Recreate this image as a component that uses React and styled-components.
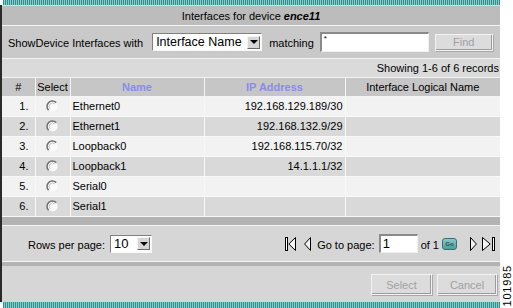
import React from "react";
import styled, { createGlobalStyle } from "styled-components";

const Global = createGlobalStyle`
  html, body { margin: 0; padding: 0; background: #fff; }
  body { font-family: "Liberation Sans", Arial, sans-serif; font-size: 11px; color: #000; }
`;

const Page = styled.div`
  display: flex;
  width: 513px;
  height: 308px;
  overflow: hidden;
`;

const Panel = styled.div`
  width: 500px;
  display: flex;
  flex-direction: column;
`;

const Stripe = styled.div`
  height: ${(p) => p.$h}px;
  margin-left: 3px;
  background: repeating-linear-gradient(90deg, #2f9090 0 1px, #8ccaca 1px 2px);
  flex: none;
`;

const Body = styled.div`
  flex: 1;
  border-left: 2px solid #2a2a2a;
  display: flex;
  flex-direction: column;
  background: #d6d6d6;
`;

const Title = styled.div`
  height: 19px;
  background: #bcbcbc;
  border-top: 1px solid #dcdcdc;
  border-bottom: 1px solid #f4f4f4;
  display: flex;
  align-items: center;
  justify-content: center;
  font-size: 11px;
  b { font-style: italic; margin-left: 3px; }
`;

const FilterRow = styled.div`
  height: 32px;
  background: #c9c9c9;
  border-bottom: 1px solid #f4f4f4;
  display: flex;
  align-items: center;
  padding-left: 6px;
`;

const Label = styled.span`
  margin-right: ${(p) => p.$mr || 0}px;
  white-space: nowrap;
  padding-top: 2px;
`;

const FakeSelect = styled.div`
  width: ${(p) => p.$w}px;
  height: ${(p) => p.$h}px;
  box-sizing: border-box;
  background: #fff;
  border-top: 1px solid #808080;
  border-left: 1px solid #808080;
  border-right: 1px solid #f8f8f8;
  border-bottom: 1px solid #f8f8f8;
  display: flex;
  align-items: center;
  justify-content: space-between;
  padding-left: 3px;
  padding-right: 1px;
  font-size: ${(p) => p.$fs}px;
  margin-right: ${(p) => p.$mr || 0}px;
  white-space: nowrap;
`;

const ArrowBox = styled.div`
  width: 13px;
  height: 13px;
  flex: none;
  box-sizing: border-box;
  background: #d6d6d6;
  border-top: 1px solid #f4f4f4;
  border-left: 1px solid #f4f4f4;
  border-right: 1px solid #6a6a6a;
  border-bottom: 1px solid #6a6a6a;
  display: flex;
  align-items: center;
  justify-content: center;
  &::after {
    content: "";
    border-left: 4px solid transparent;
    border-right: 4px solid transparent;
    border-top: 4px solid #000;
  }
`;

const TextBox = styled.div`
  width: ${(p) => p.$w}px;
  height: ${(p) => p.$h}px;
  box-sizing: border-box;
  background: #fff;
  border-top: 2px solid #8a8a8a;
  border-left: 2px solid #8a8a8a;
  border-right: 1px solid #f0f0f0;
  border-bottom: 1px solid #f0f0f0;
  font-size: ${(p) => p.$fs}px;
  padding-left: 2px;
  line-height: ${(p) => p.$lh}px;
  margin-right: ${(p) => p.$mr || 0}px;
`;

const Btn = styled.div`
  width: ${(p) => p.$w}px;
  height: ${(p) => p.$h}px;
  box-sizing: border-box;
  background: #dcdcdc;
  border: 1px solid #f2f2f2;
  box-shadow: inset -1px -1px 0 #9c9c9c, 1px 1px 0 #a8a8a8;
  color: #a0a0a0;
  display: flex;
  align-items: center;
  justify-content: center;
  font-size: 11px;
  margin-right: ${(p) => p.$mr || 0}px;
`;

const ShowingRow = styled.div`
  height: 18px;
  background: #dadada;
  display: flex;
  align-items: center;
  justify-content: flex-end;
  padding-right: 1px;
`;

const Table = styled.table`
  border-collapse: collapse;
  width: 498px;
  table-layout: fixed;
  font-size: 11px;
`;

const Th = styled.th`
  height: 18px;
  padding: 0;
  background: #c6c6c6;
  border: 1px solid #f4f4f4;
  font-weight: ${(p) => (p.$link ? "bold" : "normal")};
  color: ${(p) => (p.$link ? "#8b8be8" : "#000")};
  text-align: center;
  &:first-child { border-left: none; }
  &:last-child { border-right: none; }
`;

const Td = styled.td`
  height: 19px;
  padding: 0 ${(p) => p.$pr || 0}px 0 ${(p) => p.$pl || 0}px;
  border: 1px solid #f8f8f8;
  background: ${(p) => (p.$odd ? "#f2f2f2" : "#d9d9d9")};
  text-align: ${(p) => p.$align || "left"};
  white-space: nowrap;
  line-height: 0;
  font-size: 11px;
  &:first-child { border-left: none; }
  &:last-child { border-right: none; }
  span { line-height: 13px; }
`;

const DarkBar = styled.div`
  height: 8px;
  background: #b3b3b3;
  border-bottom: 1px solid #f4f4f4;
`;

const PagerRow = styled.div`
  height: 35px;
  display: flex;
  align-items: center;
  justify-content: space-between;
  padding-left: 26px;
  padding-right: 4px;
  background: #d6d6d6;
  border-bottom: 1px solid #f4f4f4;
  font-size: 11px;
`;

const Group = styled.div`
  display: flex;
  align-items: center;
`;

const NavIcon = styled.svg`
  flex: none;
  margin-right: ${(p) => p.$mr || 0}px;
`;

const GoBtn = styled.div`
  width: 13px;
  height: 10px;
  border-radius: 3px;
  background: linear-gradient(#8cc8c8, #4f9c9c);
  border: 1px solid #2f7474;
  font-size: 6px;
  font-weight: bold;
  color: #1d4d4d;
  display: flex;
  align-items: center;
  justify-content: center;
  margin: 0 13px 0 3px;
`;

const GrayBar = styled.div`
  height: 4px;
  background: #b3b3b3;
`;

const ButtonRow = styled.div`
  flex: 1;
  display: flex;
  align-items: center;
  justify-content: flex-end;
  padding-right: 3px;
  padding-top: 1px;
  background: #d6d6d6;
`;

const Side = styled.div`
  flex: 1;
  display: flex;
  flex-direction: column;
  justify-content: flex-end;
  align-items: center;
  padding-bottom: 1px;
`;

const VText = styled.div`
  writing-mode: vertical-rl;
  transform: rotate(180deg);
  font-size: 11px;
  letter-spacing: 0.8px;
`;

const Radio = () => (
  <svg width="13" height="13" viewBox="0 0 13 13" style={{ verticalAlign: "middle" }}>
    <circle cx="6.5" cy="6.5" r="5" fill="#fbfbfb" />
    <path d="M2.6 10.2 A5.2 5.2 0 0 1 10.2 2.6" fill="none" stroke="#707070" strokeWidth="1.5" />
    <path d="M4 8.8 A3.4 3.4 0 0 1 8.8 4" fill="none" stroke="#c4c4c4" strokeWidth="1" />
  </svg>
);

const FirstIcon = () => (
  <NavIcon width="11" height="16" viewBox="0 0 11 16" $mr={8}>
    <rect x="0.5" y="1.5" width="2" height="13" fill="#fff" stroke="#000" />
    <polygon points="10.5,1.5 3.8,8 10.5,14.5" fill="#f2f2f2" stroke="#000" />
  </NavIcon>
);
const PrevIcon = () => (
  <NavIcon width="7" height="16" viewBox="0 0 7 16" $mr={6}>
    <polygon points="6.5,1.5 0.6,8 6.5,14.5" fill="#f2f2f2" stroke="#000" />
  </NavIcon>
);
const NextIcon = () => (
  <NavIcon width="7" height="16" viewBox="0 0 7 16" $mr={5}>
    <polygon points="0.5,1.5 6.4,8 0.5,14.5" fill="#f2f2f2" stroke="#000" />
  </NavIcon>
);
const LastIcon = () => (
  <NavIcon width="14" height="16" viewBox="0 0 14 16">
    <polygon points="0.5,1.5 8.2,8 0.5,14.5" fill="#f2f2f2" stroke="#000" />
    <rect x="10.5" y="1.5" width="2" height="13" fill="#fff" stroke="#000" />
  </NavIcon>
);

const rows = [
  ["Ethernet0", "192.168.129.189/30"],
  ["Ethernet1", "192.168.132.9/29"],
  ["Loopback0", "192.168.115.70/32"],
  ["Loopback1", "14.1.1.1/32"],
  ["Serial0", ""],
  ["Serial1", ""],
];

export default function App() {
  return (
    <>
      <Global />
      <Page>
        <Panel>
          <Stripe $h={5} />
          <Body>
            <Title>
              Interfaces for device <b>ence11</b>
            </Title>
            <FilterRow>
              <Label $mr={9}>ShowDevice Interfaces with</Label>
              <FakeSelect $w={110} $h={18} $fs={12.5} $mr={7}>
                <span>Interface Name</span>
                <ArrowBox />
              </FakeSelect>
              <Label $mr={6}>matching</Label>
              <TextBox $w={109} $h={20} $fs={8} $lh={9} $mr={6}>*</TextBox>
              <Btn $w={58} $h={17}>Find</Btn>
            </FilterRow>
            <ShowingRow>Showing 1-6 of 6 records</ShowingRow>
            <Table>
              <colgroup>
                <col style={{ width: 33 }} />
                <col style={{ width: 35 }} />
                <col style={{ width: 134 }} />
                <col style={{ width: 141 }} />
                <col />
              </colgroup>
              <thead>
                <tr>
                  <Th>#</Th>
                  <Th>Select</Th>
                  <Th $link>Name</Th>
                  <Th $link>IP Address</Th>
                  <Th>Interface Logical Name</Th>
                </tr>
              </thead>
              <tbody>
                {rows.map(([name, ip], i) => (
                  <tr key={name}>
                    <Td $odd={i % 2 === 0} $align="right" $pr={6}><span>{i + 1}.</span></Td>
                    <Td $odd={i % 2 === 0} $align="center">
                      <Radio />
                    </Td>
                    <Td $odd={i % 2 === 0} $pl={2}><span>{name}</span></Td>
                    <Td $odd={i % 2 === 0} $align="right" $pr={2}><span>{ip}</span></Td>
                    <Td $odd={i % 2 === 0} />
                  </tr>
                ))}
              </tbody>
            </Table>
            <DarkBar />
            <PagerRow>
              <Group>
                <Label $mr={5}>Rows per page:</Label>
                <FakeSelect $w={42} $h={18} $fs={13}>
                  <span>10</span>
                  <ArrowBox />
                </FakeSelect>
              </Group>
              <Group>
                <FirstIcon />
                <PrevIcon />
                <Label $mr={4}>Go to page:</Label>
                <TextBox $w={39} $h={19} $fs={13} $lh={16} $mr={3}>1</TextBox>
                <Label>of 1</Label>
                <GoBtn>Go</GoBtn>
                <NextIcon />
                <LastIcon />
              </Group>
            </PagerRow>
            <GrayBar />
            <ButtonRow>
              <Btn $w={61} $h={21} $mr={5}>Select</Btn>
              <Btn $w={60} $h={21}>Cancel</Btn>
            </ButtonRow>
          </Body>
          <Stripe $h={6} />
        </Panel>
        <Side>
          <VText>101985</VText>
        </Side>
      </Page>
    </>
  );
}
